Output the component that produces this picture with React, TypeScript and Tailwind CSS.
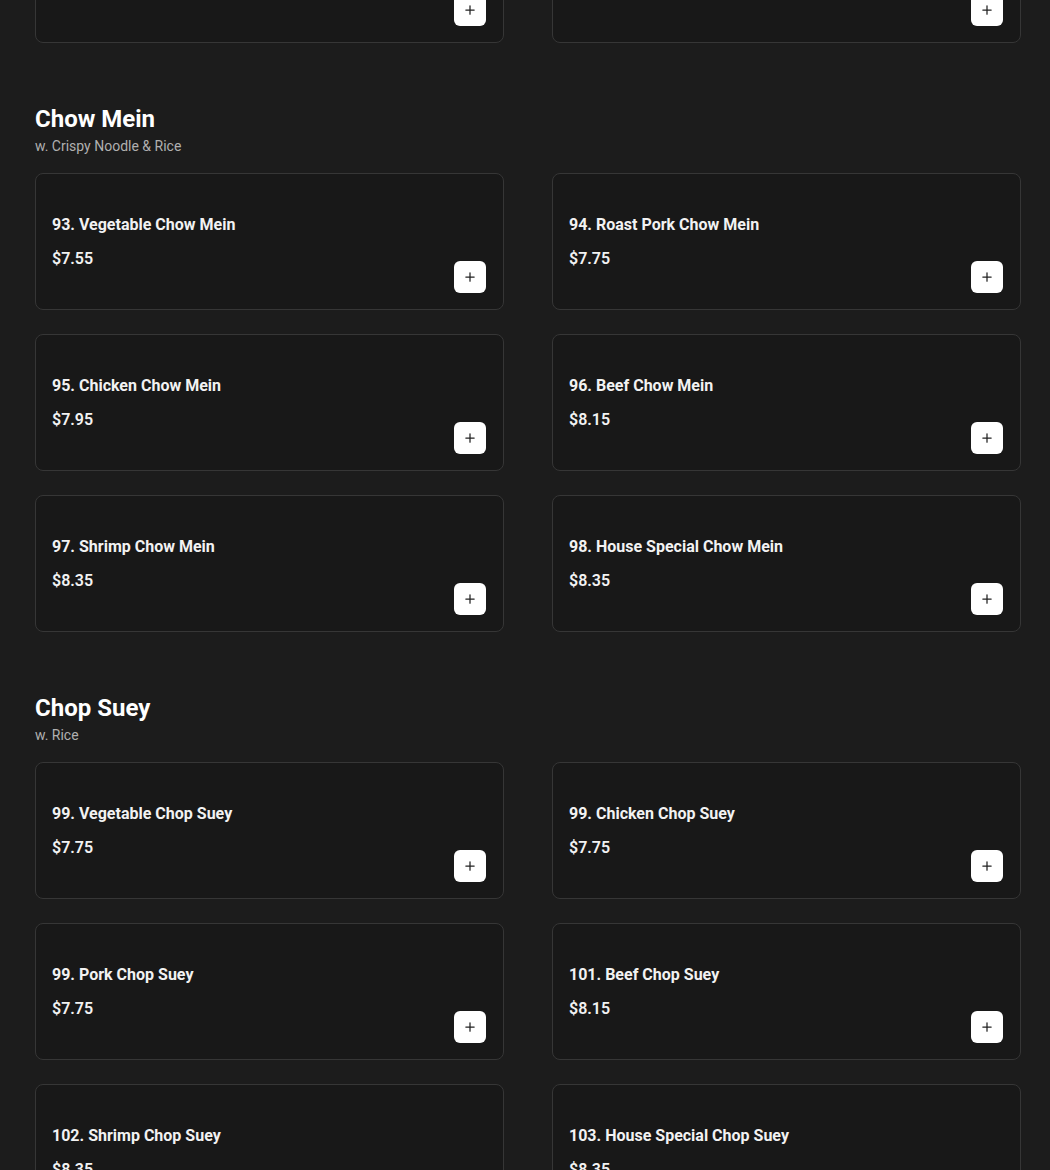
import React from "react";

type Item = { name: string; price: string };

const sections: { title: string; note: string; items: Item[] }[] = [
  {
    title: "Chow Mein",
    note: "w. Crispy Noodle & Rice",
    items: [
      { name: "93. Vegetable Chow Mein", price: "$7.55" },
      { name: "94. Roast Pork Chow Mein", price: "$7.75" },
      { name: "95. Chicken Chow Mein", price: "$7.95" },
      { name: "96. Beef Chow Mein", price: "$8.15" },
      { name: "97. Shrimp Chow Mein", price: "$8.35" },
      { name: "98. House Special Chow Mein", price: "$8.35" },
    ],
  },
  {
    title: "Chop Suey",
    note: "w. Rice",
    items: [
      { name: "99. Vegetable Chop Suey", price: "$7.75" },
      { name: "99. Chicken Chop Suey", price: "$7.75" },
      { name: "99. Pork Chop Suey", price: "$7.75" },
      { name: "101. Beef Chop Suey", price: "$8.15" },
      { name: "102. Shrimp Chop Suey", price: "$8.35" },
      { name: "103. House Special Chop Suey", price: "$8.35" },
    ],
  },
];

const AddButton = () => (
  <button className="absolute right-[17px] bottom-4 flex h-8 w-8 items-center justify-center rounded-md bg-white text-[#222]">
    <svg width="10" height="10" viewBox="0 0 12 12" fill="none" stroke="currentColor" strokeWidth="1.5" strokeLinecap="round">
      <path d="M6 1v10M1 6h10" />
    </svg>
  </button>
);

const Card = ({ item }: { item?: Item }) => (
  <div className="relative flex h-[137px] flex-col justify-center rounded-lg border border-[#363636] bg-[#181818] px-4">
    {item && (
      <>
        <p className="text-[16px] font-bold leading-5 text-[#f2f2f2]">{item.name}</p>
        <p className="mt-[14px] text-[16px] font-semibold leading-5 text-[#f2f2f2]">{item.price}</p>
      </>
    )}
    <AddButton />
  </div>
);

export default function App() {
  return (
    <div className="h-[1170px] overflow-hidden bg-[#1c1c1c] pl-[35px] pr-[29px] font-['Roboto',sans-serif] text-white">
      <div className="-mt-[94px] grid grid-cols-2 gap-x-12">
        <Card />
        <Card />
      </div>
      {sections.map((s) => (
        <section key={s.title} className="mt-[60px]">
          <h2 className="text-[24px] font-bold leading-8 text-white">{s.title}</h2>
          <p className="mt-px text-[14px] leading-5 text-[#b0b0b0]">{s.note}</p>
          <div className="mt-[17px] grid grid-cols-2 gap-x-12 gap-y-6">
            {s.items.map((it) => (
              <Card key={it.name} item={it} />
            ))}
          </div>
        </section>
      ))}
    </div>
  );
}
